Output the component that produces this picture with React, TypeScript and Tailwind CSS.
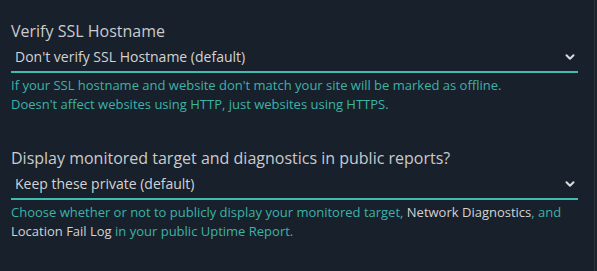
import { ChevronDown } from "lucide-react";

interface FieldProps {
  label: string;
  value: string;
  children: React.ReactNode;
}

function SelectField({ label, value, children }: FieldProps) {
  return (
    <div className="flex flex-col">
      <label className="text-[16px] leading-[24px] text-[#c9cbcd]">{label}</label>
      <div className="mt-[4px] flex items-center justify-between border-b-2 border-[#3fbcb0] pl-[4px] pr-[1px] pb-[4px]">
        <span className="text-[14px] leading-[20px] text-[#d2d3d5]">{value}</span>
        <ChevronDown className="h-[14px] w-[14px] text-[#d9dadb]" strokeWidth={3.5} />
      </div>
      <p className="mt-[3px] text-[13px] leading-[19px] text-[#3cb3a7]">{children}</p>
    </div>
  );
}

export default function App() {
  return (
    <div
      className="flex h-[271px] w-[597px] bg-[#18202b]"
      style={{ fontFamily: '"Open Sans", "Noto Sans", sans-serif' }}
    >
      <div className="flex w-[594px] flex-col gap-[32px] pl-[11px] pr-[16px] pt-[19px]">
        <SelectField label="Verify SSL Hostname" value="Don't verify SSL Hostname (default)">
          If your SSL hostname and website don't match your site will be marked as offline.
          <br />
          Doesn't affect websites using HTTP, just websites using HTTPS.
        </SelectField>
        <SelectField
          label="Display monitored target and diagnostics in public reports?"
          value="Keep these private (default)"
        >
          Choose whether or not to publicly display your monitored target,{" "}
          <span className="text-[#d2d3d5]">Network Diagnostics</span>, and
          <br />
          <span className="text-[#d2d3d5]">Location Fail Log</span> in your public Uptime Report.
        </SelectField>
      </div>
      <div className="w-[3px] border-l border-[#2a323c] bg-[#1b232d]" />
    </div>
  );
}
